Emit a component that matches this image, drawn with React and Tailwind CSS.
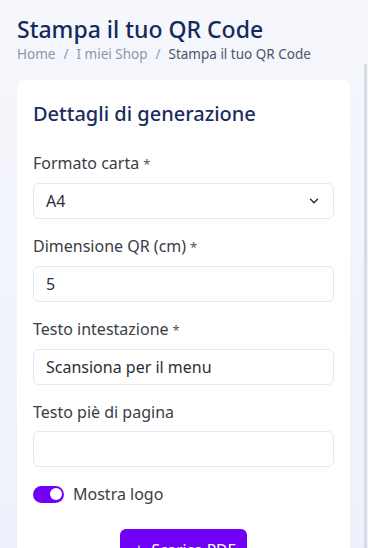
import React from "react";

function Field({ label, required, children }) {
  return (
    <div className="flex flex-col">
      <label className="text-[16px] leading-[22px] text-[#3a3d45]">
        {label}
        {required && <span className="ml-1 text-[13px] text-[#555]">*</span>}
      </label>
      <div className="mt-[8px]">{children}</div>
    </div>
  );
}

function Input({ value }) {
  return (
    <div className="flex h-[36px] items-center rounded-[6px] border border-[#e6e8ee] bg-white px-[12px] text-[16px] text-[#2b2e35]">
      {value}
    </div>
  );
}

export default function App() {
  return (
    <div
      className="relative h-[548px] w-[368px] overflow-hidden bg-gradient-to-b from-[#f6f7fc] to-[#eef1fb]"
      style={{ fontFamily: "'Noto Sans', 'Open Sans', sans-serif" }}
    >
      <div className="absolute right-[1px] top-[64px] h-[490px] w-[3px] rounded-full bg-[#d9dce4]" />
      <div className="px-[17px] pt-[14px]">
        <h1 className="text-[23px] font-medium leading-[31px] text-[#142a5c]">Stampa il tuo QR Code</h1>
        <div className="flex items-center gap-[8px] text-[13.5px] leading-[18px]">
          <span className="text-[#8d96aa]">Home</span>
          <span className="text-[#8d96aa]">/</span>
          <span className="text-[#8d96aa]">I miei Shop</span>
          <span className="text-[#8d96aa]">/</span>
          <span className="text-[#4c5568]">Stampa il tuo QR Code</span>
        </div>
        <div className="mt-[17px] w-[333px] rounded-t-[8px] bg-white px-[16px] pt-[20px] pb-[40px]">
          <h2 className="text-[20px] font-medium leading-[28px] text-[#1a2d5f]">Dettagli di generazione</h2>
          <div className="mt-[24px] flex flex-col gap-[16px]">
            <Field label="Formato carta" required>
              <div className="flex h-[36px] items-center justify-between rounded-[6px] border border-[#e6e8ee] bg-white px-[12px] text-[16px] text-[#2b2e35]">
                <span>A4</span>
                <svg width="14" height="14" viewBox="0 0 24 24" fill="none" stroke="#333" strokeWidth="2.5" strokeLinecap="round" strokeLinejoin="round">
                  <path d="M6 9l6 6 6-6" />
                </svg>
              </div>
            </Field>
            <Field label="Dimensione QR (cm)" required>
              <Input value="5" />
            </Field>
            <Field label="Testo intestazione" required>
              <Input value="Scansiona per il menu" />
            </Field>
            <Field label="Testo piè di pagina">
              <Input value="" />
            </Field>
          </div>
          <div className="mt-[16px] flex h-[22px] items-center gap-[9px]">
            <div className="flex h-[17px] w-[31px] items-center justify-end rounded-full bg-[#7000f8] pr-[2px]">
              <div className="h-[12px] w-[12px] rounded-full bg-white" />
            </div>
            <span className="text-[16px] leading-[22px] text-[#3a3d45]">Mostra logo</span>
          </div>
          <div className="mt-[24px] flex justify-center">
            <button className="flex h-[44px] items-center gap-[6px] rounded-[6px] bg-[#7000f8] px-[12px] text-[15.5px] text-white">
              <svg width="14" height="14" viewBox="0 0 24 24" fill="none" stroke="#fff" strokeWidth="2" strokeLinecap="round">
                <path d="M12 3v14M6 12l6 6 6-6" />
              </svg>
              Scarica PDF
            </button>
          </div>
        </div>
      </div>
    </div>
  );
}
